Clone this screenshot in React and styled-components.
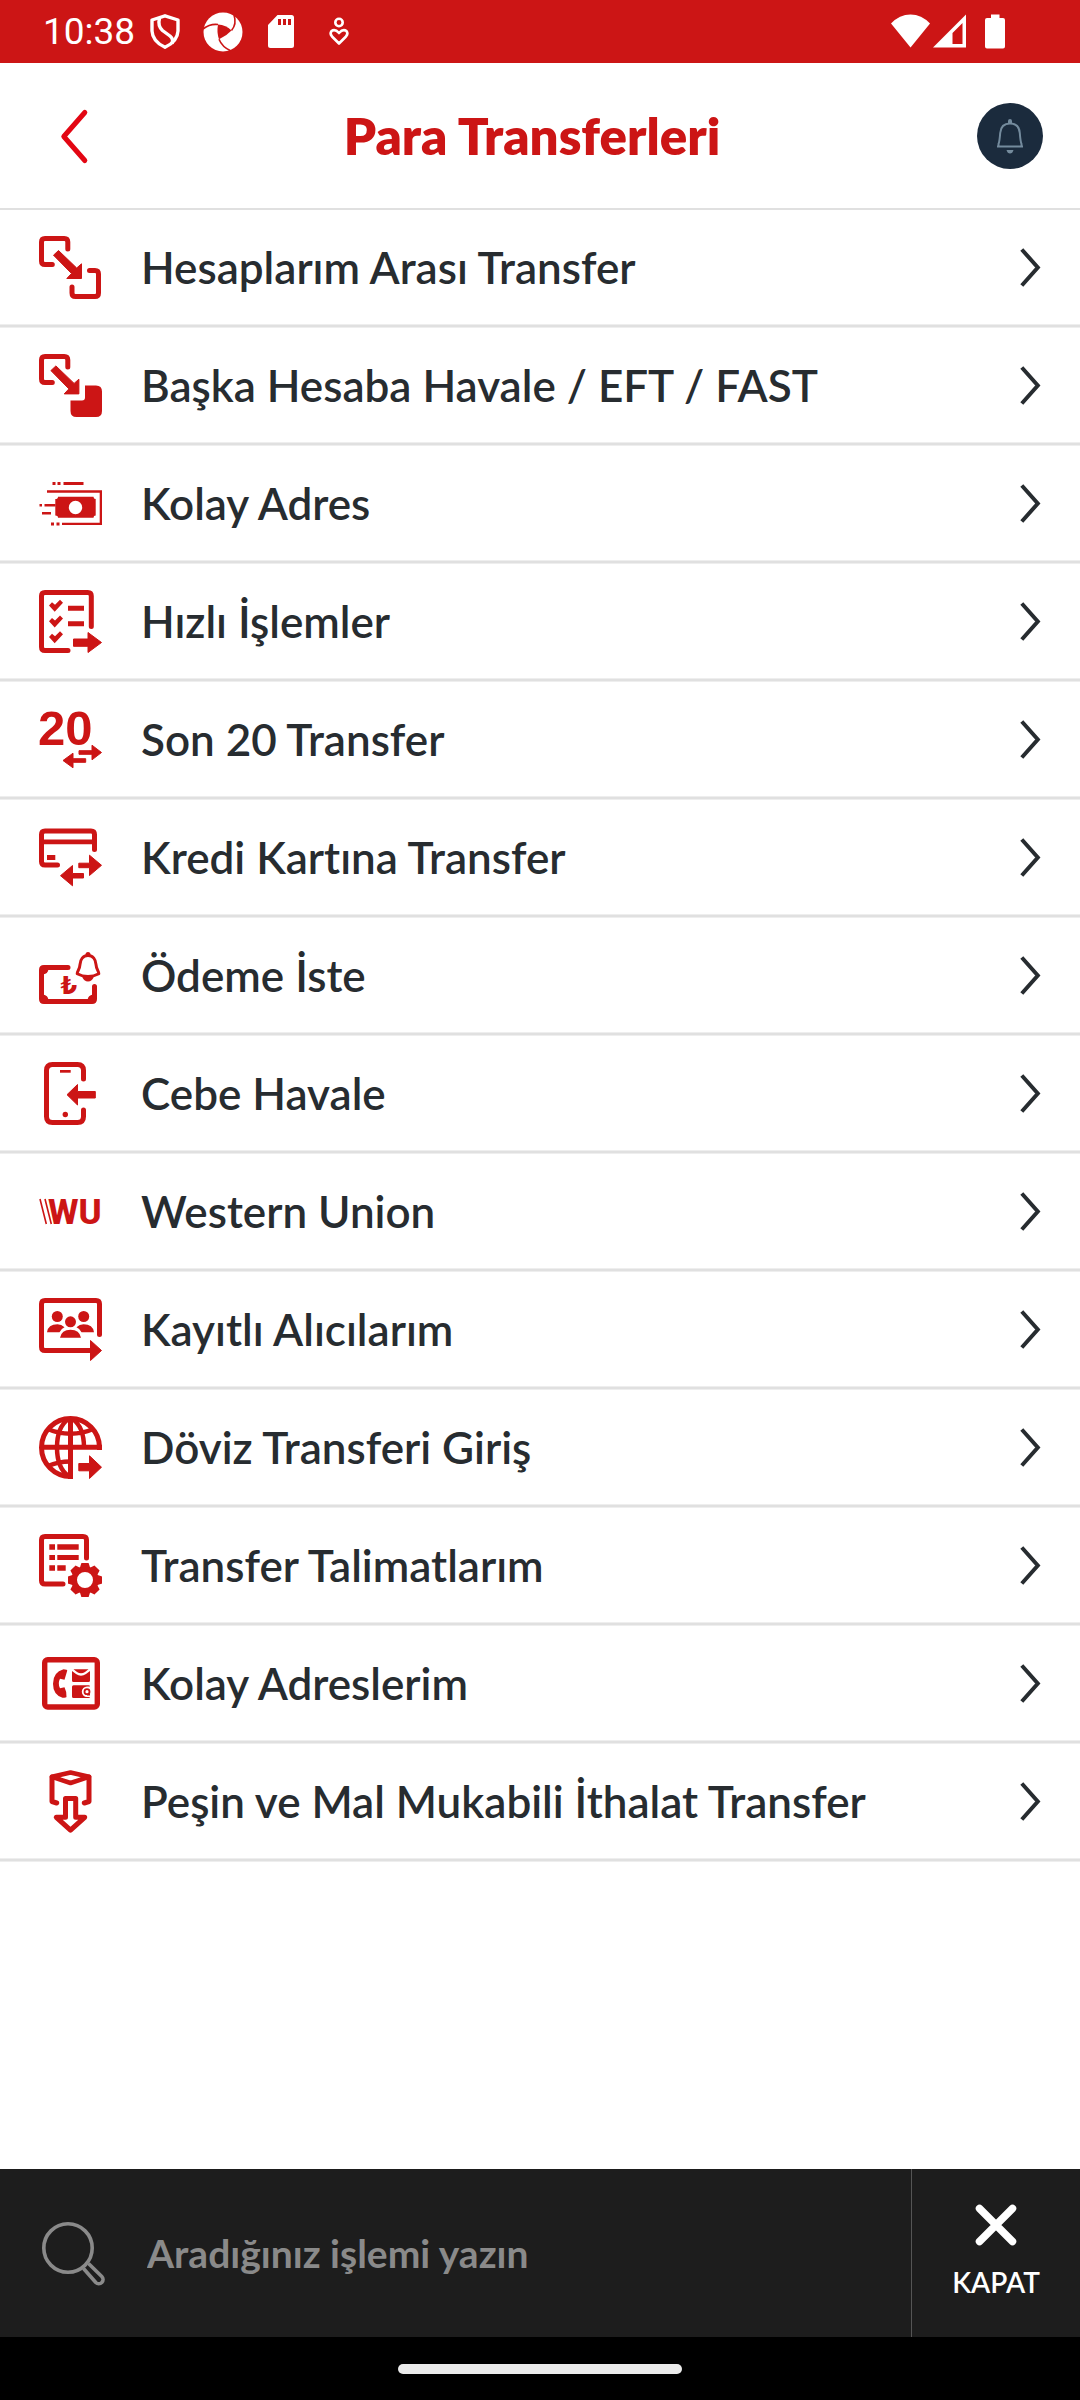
import React from "react";
import styled, { createGlobalStyle } from "styled-components";

const red = "#cc1515";
const ink = "#272c30";
const muted = "#8a8a8a";

const GlobalStyle = createGlobalStyle`
  *, *::before, *::after { box-sizing: border-box; }
  body {
    margin: 0;
    background: #fff;
    color: ${ink};
    font-family: Lato, "Open Sans", sans-serif;
    font-variant-ligatures: none;
  }
`;

const Screen = styled.div`
  display: flex;
  flex-direction: column;
  min-height: 100vh;
`;

const StatusBar = styled.div`
  display: flex;
  align-items: center;
  justify-content: space-between;
  height: 63px;
  padding: 0 75px 0 43px;
  background: ${red};
  color: #fff;
`;

const StatusGroup = styled.div`
  display: flex;
  align-items: center;
  gap: ${(p) => p.$gap}px;
`;

const Clock = styled.span`
  font: 400 37px/44px Roboto, sans-serif;
`;

const Glyph = styled.svg`
  display: block;
  flex: none;
  overflow: visible;
  width: ${(p) => p.$w}px;
  height: ${(p) => p.$h}px;
`;

const Header = styled.header`
  display: flex;
  align-items: center;
  height: 147px;
  padding: 0 37px 0 61px;
  border-bottom: 2px solid #e0e0e0;
`;

const IconButton = styled.button`
  display: grid;
  place-items: center;
  padding: 0;
  border: 0;
  background: none;
  cursor: pointer;
`;

const BellButton = styled(IconButton)`
  width: 66px;
  height: 66px;
  border-radius: 50%;
  background: #1b2b3d;
`;

const Title = styled.h1`
  flex: 1;
  margin: 0;
  color: ${red};
  font-size: 51px;
  font-weight: 800;
  line-height: 64px;
  text-align: center;
`;

const Menu = styled.ul`
  flex: 1;
  margin: 0;
  padding: 0;
  list-style: none;
`;

const MenuLink = styled.a`
  display: flex;
  align-items: center;
  gap: 39px;
  height: 118px;
  padding: 0 39px 4px;
  color: inherit;
  text-decoration: none;
  box-shadow: inset 0 -1px #eee, inset 0 -3px #e0e0e0, inset 0 -4px #eee;
`;

const MenuLabel = styled.span`
  flex: 1;
  font-size: 44px;
  font-weight: 600;
  line-height: 56px;
`;

const Footer = styled.footer`
  display: flex;
  height: 168px;
  background: #1d1d1d;
`;

const SearchBox = styled.label`
  display: flex;
  flex: 1;
  align-items: center;
  gap: 42px;
  padding-left: 42px;
  border-right: 1px solid #555;
`;

const SearchInput = styled.input`
  flex: 1;
  min-width: 0;
  padding: 0;
  border: 0;
  outline: 0;
  background: none;
  color: #fff;
  font: 700 39px/48px Lato, sans-serif;
  &::placeholder { color: ${muted}; opacity: 1; }
`;

const CloseButton = styled.button`
  display: flex;
  flex-direction: column;
  align-items: center;
  justify-content: center;
  gap: 19px;
  width: 168px;
  padding: 0 0 4px;
  border: 0;
  background: none;
  color: #fff;
  font: 600 28px/34px Lato, sans-serif;
  cursor: pointer;
`;

const NavBar = styled.div`
  display: flex;
  justify-content: center;
  height: 63px;
  padding-top: 27px;
  background: #000;
`;

const HomeHandle = styled.div`
  width: 284px;
  height: 10px;
  border-radius: 5px;
  background: #ebebeb;
`;

const line = { fill: "none", stroke: red, strokeWidth: 5, strokeLinecap: "round", strokeLinejoin: "round" };
const solid = { fill: red, stroke: red, strokeWidth: 1, strokeLinejoin: "round" };

const sourceFrame = "M28.8 13V6q0-3.5-3.5-3.5H6Q2.5 2.5 2.5 6V25q0 3.5 3.5 3.5H13.3";
const diagonalArrow = "M19.5 14.5L37.7 32L42.5 27.8V42.5H27.8L32.5 37.5L14.5 19.2Z";
const tick = "M10 15.5l3-3.2 3 2.5 5-5 3 3-8.3 9z";

const icons = {
  between: (
    <>
      <path {...line} d={sourceFrame} />
      <path {...solid} d={diagonalArrow} />
      <path {...line} d="M51.5 34.5H57q3.5 0 3.5 3.5V57q0 3.5-3.5 3.5H37.5q-3.5 0-3.5-3.5V51" transform="translate(-1 0)" />
    </>
  ),
  other: (
    <>
      <path {...line} d={sourceFrame} />
      <path {...solid} d={diagonalArrow} transform="translate(-2.6 -2.6)" />
      <path fill={red} d="M46 31.5H57Q63 31.5 63 37.5V57Q63 63 57 63H37.500Q31.5 63 31.5 57V46.5H43Q46 46.5 46 43.5Z" />
    </>
  ),
  cash: (
    <>
      <path fill={red} d="M13.5 10h3v3h-3zM18.5 10h3v3h-3zM24.5 10h20v3h-20zM12 50.5h3v3h-3zM17.5 50.5h3v3h-3zM0.5 32h2.5v2.5h-2.5zM5.5 32h11v2.5h-11zM3 40h9v2.5h-9z" />
      <path fill={red} d="M8 18.3H63V53H23V50.7H60.7V20.7H8Z" />
      <path fill={red} fillRule="evenodd" d="M19 24.7H54.5Q54.5 27 56.7 27V43.5Q54.5 43.5 54.5 45.7H19Q19 43.5 16.3 43.5V27Q19 27 19 24.7ZM36.5 28.8a6.7 6.7 0 1 0 0 13.4a6.7 6.7 0 1 0 0-13.4Z" />
    </>
  ),
  checklist: (
    <>
      <path {...line} d="M52.3 36.5V6q0-3.5-3.5-3.5H6Q2.5 2.5 2.5 6V57q0 3.5 3.5 3.5H29" />
      <path fill={red} d={tick} />
      <path fill={red} d={tick} transform="translate(0 15.7)" />
      <path fill={red} d={tick} transform="translate(0 31.4)" />
      <path fill={red} d="M29 15.8h16v5h-16zM29 31.3h16v5h-16z" />
      <path {...solid} d="M34.5 49H49V42.5L62.5 52.5L49 62.5V56.3H34.5Z" />
    </>
  ),
  last20: (
    <>
      <text x="-1" y="36.500" fill={red} fontFamily="Liberation Sans, sans-serif" fontWeight="700" fontSize="49">20</text>
      <path {...solid} d="M40 42.7H53V37.2L62.5 44.5L53 51.8V46.3H40Z" />
      <path {...solid} d="M46.7 50.7H34V45.2L24 52.5L34 59.8V54.3H46.7Z" />
    </>
  ),
  card: (
    <>
      <path {...line} d="M55.5 23.5V8.5q0-3.5-3.5-3.5H6Q2.5 5 2.5 8.5V35.5q0 3.5 3.5 3.5H18.5" />
      <path fill={red} d="M2 13.5H56v4.8H2zM8 29h8.3v5H8z" />
      <path {...solid} d="M39.8 37.2H50.5V29.2L62.5 39.3L50.5 49.5V41.7H39.8Z" />
      <path {...solid} d="M44.5 47.5H33.5V39.5L21.5 49.7L33.5 59.8V52H44.5Z" />
    </>
  ),
  request: (
    <>
      <path {...line} d="M29 23.5H5Q2.5 23.5 2.5 26V55Q2.5 57.5 5 57.5H53Q55.5 57.5 55.5 55V42.5" />
      <path fill={red} d="M3 24H9.5Q9.5 30.5 3 30.5ZM3 57V50.5Q9.5 50.5 9.5 57ZM55 57H48.5Q48.5 50.5 55 50.5Z" />
      <text x="21.500" y="50" fill={red} fontFamily="DejaVu Sans, sans-serif" fontWeight="700" fontSize="24">₺</text>
      <circle cx="49" cy="10.5" r="2.5" fill={red} />
      <path {...line} strokeWidth="3" d="M49 11.5c-5 0-7.7 4-8 9c-.3 5-2.8 6.5-2.8 9.3q5 2.7 10.8 2.700t10.8-2.7c0-2.8-2.5-4.3-2.8-9.3c-.3-5-3-9-8-9z" />
      <path fill={red} d="M43 32.5h12q-2 5-6 5t-6-5z" />
    </>
  ),
  phone: (
    <>
      <path {...line} d="M44.5 17V8.5q0-6-6-6H13.5q-6 0-6 6V54.5q0 6 6 6H38.5q6 0 6-6V48" />
      <path fill={red} d="M21 8h10.7v2.7H21z" />
      <circle cx="26.3" cy="52.5" r="2.7" fill={red} />
      <path {...solid} d="M56.3 29.5H38.5V22.5L28 32.7L38.5 43V36H56.3Z" />
    </>
  ),
  wu: (
    <>
      <path fill="none" stroke={red} strokeWidth="1.6" d="M1 19L7.3 44M6 19L12.3 44" />
      <text x="9" y="44" fill={red} fontFamily="Roboto, sans-serif" fontWeight="800" fontSize="35">WU</text>
    </>
  ),
  people: (
    <>
      <path {...line} d="M60.5 36.5V6q0-3.5-3.5-3.5H6Q2.5 2.5 2.5 6V49q0 3.5 3.5 3.5H52" />
      <path {...solid} d="M51.5 42.5L62.5 52.5L51.5 62.5Z" />
      <circle cx="18.3" cy="18.5" r="5.5" fill={red} />
      <circle cx="44.7" cy="18.5" r="5.5" fill={red} />
      <circle cx="31.5" cy="23.8" r="5.5" fill={red} />
      <path fill={red} d="M21 39.8q1.5-8 10.5-8t10.5 8zM8 34.2q1-8 10.5-8q4 0 7 3q-3.5 1.5-5 5zM55 34.2q-1-8-10.5-8q-4 0-7 3q3.5 1.5 5 5z" />
    </>
  ),
  globe: (
    <>
      <path {...line} strokeLinecap="butt" d="M60.5 34V31.5A29 29 0 1 0 31.5 60.5H34" />
      <path {...line} strokeLinecap="butt" d="M31.5 2V63M2 31.3H63" />
      <path {...line} strokeLinecap="butt" strokeWidth="4.5" d="M29.5 3Q18 11 18 31.5T29.5 60M33.5 3Q45 11 45 31.5M9 13Q19 17.7 31.5 17.7T54 13M9 50Q19 45.5 31.5 45.5" />
      <path {...solid} d="M39.8 47.5H50.5V39.8L62.5 51.2L50.5 62.5V54.8H39.8Z" />
    </>
  ),
  orders: (
    <>
      <path {...line} d="M47.5 24V6q0-3.5-3.5-3.5H6Q2.5 2.5 2.5 6V46.5q0 3.5 3.5 3.5H24" />
      <path fill={red} d="M10.3 10.3H16v5.5h-5.7zM18.3 10.3H39.7v5.5H18.3zM10.3 21H16v5h-5.7zM18.3 21H39.7v5H18.3zM10.3 31.3H16v5.5h-5.7zM18.3 31.3H26.7v5.5H18.3z" />
      <circle cx="46" cy="46" r="10.8" fill="none" stroke={red} strokeWidth="5.6" />
      {[0, 45, 90, 135, 180, 225, 270, 315].map((a) => (
        <path key={a} fill={red} transform={`rotate(${a} 46 46)`} d="M42.2 29.5Q42.2 29 42.7 29H49.3Q49.8 29 49.8 29.5L51.5 35H40.5Z" />
      ))}
    </>
  ),
  contacts: (
    <>
      <rect x="5.7" y="7.7" width="52.6" height="47.3" rx="3" fill="none" stroke={red} strokeWidth="5.4" />
      <path fill={red} d="M24.5 17.3q4 0 3.7 1.5l-2.7 9-4.5-1q-2.5 4.7 0 9.5l4.5-1q2.3 4.5 2 9.7q0 .7-4 .7q-9.500-3-9.500-14q0-11.5 10.5-14.4z" />
      <path fill={red} d="M33 19l4 3q5 3.5 10 0l4-3V28.5q0 1.5-1.5 1.5H34.5q-1.5 0-1.5-1.5zM34.5 17.3H49.5l-3.5 2.7q-4 2.5-8 0zM34.5 33.3H49.5q1.5 0 1.5 1.2H48a5.2 5.2 0 0 0 0 10.4H51q0 1-1.5 1H34.5q-1.5 0-1.5-1.5V34.8q0-1.5 1.5-1.5z" />
      <circle cx="48" cy="39.7" r="2.5" fill="none" stroke={red} strokeWidth="1.8" />
      <path fill={red} d="M48 42H51v1.5H48z" />
    </>
  ),
  box: (
    <>
      <path {...line} strokeWidth="4.5" d="M31.5 2.5L50 6.8L31.5 13L13 6.8Z" />
      <path {...line} d="M13 7V31.5L17.7 33M50 7V31.5L45.3 33" />
      <path {...line} d="M26.5 28.5H36.7V47.3H45.7L31.5 60.2L17.3 47.3H26.5Z" />
    </>
  ),
};

const items = [
  ["Hesaplarım Arası Transfer", "between"],
  ["Başka Hesaba Havale / EFT / FAST", "other"],
  ["Kolay Adres", "cash"],
  ["Hızlı İşlemler", "checklist"],
  ["Son 20 Transfer", "last20"],
  ["Kredi Kartına Transfer", "card"],
  ["Ödeme İste", "request"],
  ["Cebe Havale", "phone"],
  ["Western Union", "wu"],
  ["Kayıtlı Alıcılarım", "people"],
  ["Döviz Transferi Giriş", "globe"],
  ["Transfer Talimatlarım", "orders"],
  ["Kolay Adreslerim", "contacts"],
  ["Peşin ve Mal Mukabili İthalat Transfer", "box"],
];

function MenuRow({ label, icon }) {
  return (
    <li>
      <MenuLink href="#">
        <Glyph $w={63} $h={63} viewBox="0 0 63 63" aria-hidden="true">{icons[icon]}</Glyph>
        <MenuLabel>{label}</MenuLabel>
        <Glyph $w={21} $h={39} viewBox="0 0 21 39" aria-hidden="true">
          <path d="M1.8 1.5L17.8 19.5L1.8 37.5" fill="none" stroke={ink} strokeWidth="4" />
        </Glyph>
      </MenuLink>
    </li>
  );
}

function Status() {
  return (
    <StatusBar>
      <StatusGroup $gap={15}>
        <Clock>10:38</Clock>
        <Glyph $w={38} $h={35} viewBox="0 0 38 35" aria-hidden="true">
          <g fill="none" stroke="#fff" strokeWidth="3.4" strokeLinejoin="round">
            <path d="M15 1.8L28 6V17Q27.5 27.5 15 33.3Q2.5 27.500 2 17V6Z" />
            <path d="M9.5 4Q7.5 12 12.5 16.500L20 22Q24 25.500 22 29.5" />
          </g>
        </Glyph>
        <Glyph $w={50} $h={40} viewBox="0 0 50 40" aria-hidden="true">
          <circle cx="20" cy="20" r="19.5" fill="#fff" />
          <path fill={red} d="M15 12.5Q23 13 28.5 18.5Q23.5 24 16 27.3Q13.5 20 15 12.5Z" />
          <path fill="none" stroke={red} strokeWidth="1.6" d="M0 17Q7 11.5 15 12.5M31 3Q34 12 28.5 18.5M16 27.3Q19 35 28 39" />
        </Glyph>
        <Glyph $w={46} $h={35} viewBox="0 0 46 35" aria-hidden="true">
          <path fill="#fff" fillRule="evenodd" d="M9.5 1H23.5Q26 1 26 3.5V31.5Q26 34 23.5 34H2.5Q0 34 0 31.5V11ZM10 5v6h3V5zM15 5v6h3V5zM20 5v6h3V5z" />
        </Glyph>
        <Glyph $w={20} $h={29} viewBox="0 0 20 29" aria-hidden="true">
          <circle cx="10" cy="5.5" r="3.7" fill="none" stroke="#fff" strokeWidth="2.6" />
          <path fill="none" stroke="#fff" strokeWidth="2.6" strokeLinejoin="round" d="M10 26.5L3 19.5Q.5 16.5 2.5 14Q6 11.5 10 16Q14 11.5 17.5 14Q19.5 16.5 17 19.5Z" />
        </Glyph>
      </StatusGroup>
      <StatusGroup $gap={3}>
        <Glyph $w={39} $h={35} viewBox="0 0 39 35" aria-hidden="true">
          <path fill="#fff" d="M19.5 33.5L0 9.5Q8.5 .5 19.5 .5T39 9.5Z" />
        </Glyph>
        <Glyph $w={49} $h={35} viewBox="0 0 49 35" aria-hidden="true">
          <path fill="#fff" fillRule="evenodd" d="M33 .5V33.5H0ZM29.5 9L19.5 19V30H29.5Z" />
        </Glyph>
        <Glyph $w={20} $h={35} viewBox="0 0 20 35" aria-hidden="true">
          <path fill="#fff" d="M6 .5H14.5V4H18Q20 4 20 6V32.5Q20 34.5 18 34.5H2Q0 34.5 0 32.5V6Q0 4 2 4H6Z" />
        </Glyph>
      </StatusGroup>
    </StatusBar>
  );
}

export default function App() {
  return (
    <Screen>
      <GlobalStyle />
      <Status />
      <Header>
        <IconButton type="button" aria-label="Geri">
          <Glyph $w={26} $h={54} viewBox="0 0 26 54" aria-hidden="true">
            <path d="M23.8 3.5L2.8 27.500L23.8 51.5" fill="none" stroke="#e30613" strokeWidth="5" strokeLinecap="round" strokeLinejoin="round" />
          </Glyph>
        </IconButton>
        <Title>Para Transferleri</Title>
        <BellButton type="button" aria-label="Bildirimler">
          <Glyph $w={28} $h={36} viewBox="0 0 28 36" aria-hidden="true">
            <g fill="none" stroke="#748b9d" strokeWidth="2">
              <path d="M1 28.5H27M2.5 28V26Q3.5 24 4.2 15Q5 5.5 14 5.5T23.8 15Q24.5 24 25.5 26V28" />
            </g>
            <path fill="#748b9d" d="M12 5.5V3q0-2 2-2t2 2V5.5zM10.5 32H17.5q-1 3.5-3.5 3.5T10.5 32z" />
          </Glyph>
        </BellButton>
      </Header>
      <Menu>
        {items.map(([label, icon]) => (
          <MenuRow key={label} label={label} icon={icon} />
        ))}
      </Menu>
      <Footer>
        <SearchBox>
          <Glyph $w={63} $h={63} viewBox="0 0 63 63" role="img" aria-label="Ara">
            <g fill="none" stroke={muted} strokeWidth="3.6">
              <circle cx="26" cy="26" r="24.2" />
              <path d="M46.5 41.5L59.8 54.500a4.2 4.2 0 0 1-6 6L41.5 46.5" />
            </g>
          </Glyph>
          <SearchInput type="text" placeholder="Aradığınız işlemi yazın" />
        </SearchBox>
        <CloseButton type="button">
          <Glyph $w={42} $h={42} viewBox="0 0 42 42" aria-hidden="true">
            <path d="M4.5 4.5L37.500 37.5M37.5 4.5L4.5 37.5" stroke="#fff" strokeWidth="7.5" strokeLinecap="round" />
          </Glyph>
          KAPAT
        </CloseButton>
      </Footer>
      <NavBar>
        <HomeHandle />
      </NavBar>
    </Screen>
  );
}
